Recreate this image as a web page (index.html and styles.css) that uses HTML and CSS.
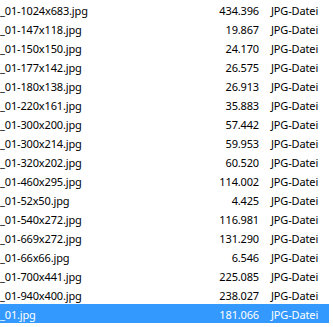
FILE: index.html
```html
<!DOCTYPE html>
<html>
<head>
<meta charset="utf-8">
<link rel="stylesheet" href="styles.css">
</head>
<body>
<div class="list">
  <div class="row"><span class="name">_01-1024x683.jpg</span><span class="size">434.396</span><span class="type">JPG-Datei</span></div>
  <div class="row"><span class="name">_01-147x118.jpg</span><span class="size">19.867</span><span class="type">JPG-Datei</span></div>
  <div class="row"><span class="name">_01-150x150.jpg</span><span class="size">24.170</span><span class="type">JPG-Datei</span></div>
  <div class="row"><span class="name">_01-177x142.jpg</span><span class="size">26.575</span><span class="type">JPG-Datei</span></div>
  <div class="row"><span class="name">_01-180x138.jpg</span><span class="size">26.913</span><span class="type">JPG-Datei</span></div>
  <div class="row"><span class="name">_01-220x161.jpg</span><span class="size">35.883</span><span class="type">JPG-Datei</span></div>
  <div class="row"><span class="name">_01-300x200.jpg</span><span class="size">57.442</span><span class="type">JPG-Datei</span></div>
  <div class="row"><span class="name">_01-300x214.jpg</span><span class="size">59.953</span><span class="type">JPG-Datei</span></div>
  <div class="row"><span class="name">_01-320x202.jpg</span><span class="size">60.520</span><span class="type">JPG-Datei</span></div>
  <div class="row"><span class="name">_01-460x295.jpg</span><span class="size">114.002</span><span class="type">JPG-Datei</span></div>
  <div class="row"><span class="name">_01-52x50.jpg</span><span class="size">4.425</span><span class="type">JPG-Datei</span></div>
  <div class="row"><span class="name">_01-540x272.jpg</span><span class="size">116.981</span><span class="type">JPG-Datei</span></div>
  <div class="row"><span class="name">_01-669x272.jpg</span><span class="size">131.290</span><span class="type">JPG-Datei</span></div>
  <div class="row"><span class="name">_01-66x66.jpg</span><span class="size">6.546</span><span class="type">JPG-Datei</span></div>
  <div class="row"><span class="name">_01-700x441.jpg</span><span class="size">225.085</span><span class="type">JPG-Datei</span></div>
  <div class="row"><span class="name">_01-940x400.jpg</span><span class="size">238.027</span><span class="type">JPG-Datei</span></div>
  <div class="row selected"><span class="name">_01.jpg</span><span class="size">181.066</span><span class="type">JPG-Datei</span></div>
</div>
</body>
</html>
```

FILE: styles.css
```css
html, body {
  margin: 0;
  padding: 0;
  background: #ffffff;
}
body {
  font-family: "Noto Sans", sans-serif;
  font-size: 11px;
  letter-spacing: -0.15px;
  color: #000000;
  overflow: hidden;
}
.list {
  display: flex;
  flex-direction: column;
  width: 329px;
}
.row {
  display: flex;
  box-sizing: border-box;
  height: 19px;
  padding-top: 3px;
  line-height: 15px;
  white-space: nowrap;
}
.name {
  width: 200px;
}
.size {
  width: 59px;
  text-align: right;
}
.type {
  padding-left: 12px;
}
.row.selected {
  background: #3399ff;
  color: #ffffff;
}
```
